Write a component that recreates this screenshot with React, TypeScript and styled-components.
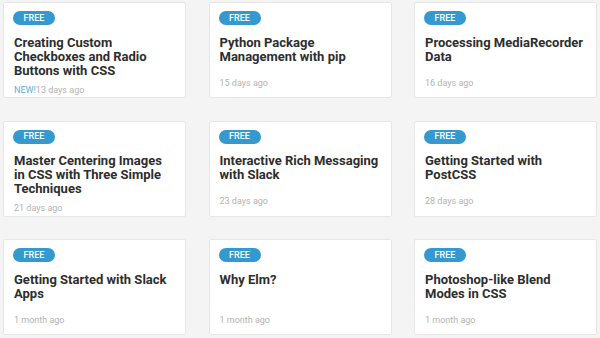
import React from "react";
import styled, { createGlobalStyle } from "styled-components";

interface Lesson {
  title: string;
  age: string;
  isNew?: boolean;
}

const lessons: Lesson[] = [
  { title: "Creating Custom Checkboxes and Radio Buttons with CSS", age: "13 days ago", isNew: true },
  { title: "Python Package Management with pip", age: "15 days ago" },
  { title: "Processing MediaRecorder Data", age: "16 days ago" },
  { title: "Master Centering Images in CSS with Three Simple Techniques", age: "21 days ago" },
  { title: "Interactive Rich Messaging with Slack", age: "23 days ago" },
  { title: "Getting Started with PostCSS", age: "28 days ago" },
  { title: "Getting Started with Slack Apps", age: "1 month ago" },
  { title: "Why Elm?", age: "1 month ago" },
  { title: "Photoshop-like Blend Modes in CSS", age: "1 month ago" },
];

const App = () => {
  return (
    <>
      <GlobalStyle />
      <Grid>
        {lessons.map((lesson) => (
          <Card key={lesson.title}>
            <Badge>FREE</Badge>
            <Title>{lesson.title}</Title>
            <Meta>
              {lesson.isNew && <NewTag>NEW!</NewTag>}
              {lesson.age}
            </Meta>
          </Card>
        ))}
      </Grid>
    </>
  );
};

export default App;

const GlobalStyle = createGlobalStyle`
  html, body {
    margin: 0;
    padding: 0;
    background: #f4f4f4;
    font-family: Roboto, "Liberation Sans", sans-serif;
  }
`;

const Grid = styled.div`
  display: grid;
  grid-template-columns: repeat(3, 183px);
  grid-auto-rows: 96px;
  column-gap: 22.5px;
  row-gap: 22.5px;
  padding: 2px 0 0 3px;
`;

const Card = styled.div`
  display: flex;
  flex-direction: column;
  align-items: flex-start;
  box-sizing: border-box;
  background: #fff;
  border: 1px solid #e6e6e6;
  border-radius: 2px;
  padding: 8px 10px 0 9px;
`;

const Badge = styled.span`
  display: inline-flex;
  align-items: center;
  justify-content: center;
  width: 42px;
  height: 14px;
  border-radius: 7px;
  background: #3399cf;
  color: #fff;
  font-size: 9px;
  font-weight: 500;
  line-height: 1;
`;

const Title = styled.h3`
  margin: 10.5px 0 0 1px;
  min-height: 35px;
  color: #2e2e2e;
  font-size: 13px;
  font-weight: 700;
  line-height: 14px;
`;

const Meta = styled.div`
  margin: 6px 0 0 1px;
  color: #b3b3b3;
  font-size: 9px;
  line-height: 12px;
`;

const NewTag = styled.span`
  color: #5eaee0;
`;
